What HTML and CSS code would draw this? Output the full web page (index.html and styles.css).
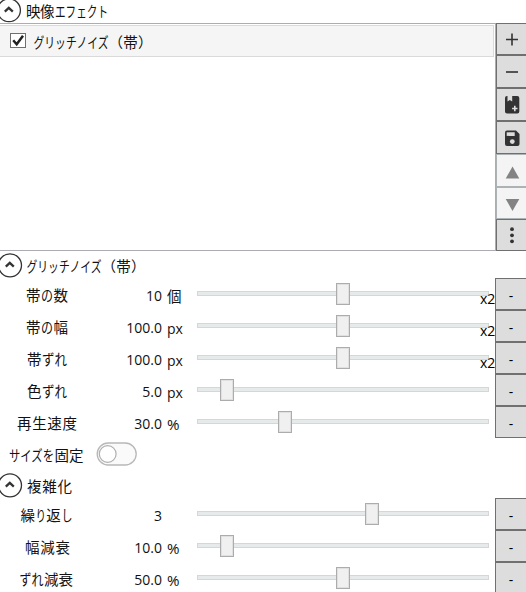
FILE: index.html
```
<!DOCTYPE html>
<html lang="ja">
<head>
<meta charset="utf-8">
<title>映像エフェクト</title>
<link rel="stylesheet" href="styles.css">
</head>
<body>
<header class="head head-first">
  <svg class="line" width="526" height="23"><circle class="ring" cx="9" cy="10.3" r="11.4"/><path class="chev" d="M4.8 11.6 8.8 7.8l4 3.8"/>
  <text x="26" y="17" textLength="28.500">映像</text><text x="55" y="17" textLength="53" lengthAdjust="spacingAndGlyphs">エフェクト</text></svg>
</header>
<section class="effects">
  <div class="list">
    <div class="item">
      <svg class="line" width="493" height="30"><rect class="box" x="10.5" y="7.5" width="15" height="14"/><path class="check" d="M13.2 14.2l3.5 4L23 9.8"/>
      <text x="33.500" y="22" textLength="75" lengthAdjust="spacingAndGlyphs">グリッチノイズ</text><text x="108.500" y="22" textLength="44">（帯）</text></svg>
    </div>
  </div>
  <div class="tools">
    <button class="tool t32"><svg width="30" height="30"><path class="sym" d="M15 9.5v12M9 15.5h12"/></svg></button>
    <button class="tool"><svg width="30" height="30"><path class="sym" d="M9 15h12"/></svg></button>
    <button class="tool"><svg width="30" height="30"><path class="solid" d="M10.500 6v5.500l2.300-1.500 2.400 1.500V6H20.300a2 2 0 0 1 2 2v13.500a2 2 0 0 1-2 2H10a2 2 0 0 1-2-2V8a2 2 0 0 1 2-2z"/><path class="cut" d="M17.800 15.800v5.400M15.100 18.500h5.400"/></svg></button>
    <button class="tool"><svg width="30" height="30"><path class="solid" d="M10 7.500h9l3.500 3.500V21a2 2 0 0 1-2 2H10a2 2 0 0 1-2-2V9.500a2 2 0 0 1 2-2z"/><path class="hole" d="M9.700 9.300h8v3.600h-8z"/><circle class="hole" cx="15.300" cy="18.600" r="2.400"/></svg></button>
    <button class="tool off"><svg width="30" height="30"><path class="tri" d="M15.500 10.500 22.300 22.500H8.700z"/></svg></button>
    <button class="tool off t32"><svg width="30" height="30"><path class="tri" d="M15.500 23 22.300 11H8.700z"/></svg></button>
    <button class="tool t32"><svg width="30" height="30"><circle class="solid" cx="15" cy="9.200" r="1.900"/><circle class="solid" cx="15" cy="15.300" r="1.900"/><circle class="solid" cx="15" cy="21.300" r="1.900"/></svg></button>
  </div>
</section>

<header class="head head-second">
  <svg class="line" width="526" height="27"><circle class="ring" cx="10" cy="14.3" r="11.500"/><path class="chev" d="M5.800 15.600 9.800 11.800l4 3.800"/>
  <text x="26.500" y="21" textLength="75" lengthAdjust="spacingAndGlyphs">グリッチノイズ</text><text x="101.500" y="21" textLength="44">（帯）</text></svg>
</header>
<div class="row">
  <svg class="line" width="197" height="32"><text x="26" y="23">帯</text><text x="41" y="23" textLength="12" lengthAdjust="spacingAndGlyphs">の</text><text x="53.500" y="23">数</text><text class="num" x="162" y="23">10</text><text x="167" y="24">個</text></svg>
  <div class="track p50"><i class="thumb"></i><span class="times">x2</span></div><button class="minus">-</button>
</div>
<div class="row">
  <svg class="line" width="197" height="32"><text x="26" y="23">帯</text><text x="41" y="23" textLength="12" lengthAdjust="spacingAndGlyphs">の</text><text x="53.500" y="23">幅</text><text class="num" x="162" y="23">100.0</text><text class="unit" x="167" y="24">px</text></svg>
  <div class="track p50"><i class="thumb"></i><span class="times">x2</span></div><button class="minus">-</button>
</div>
<div class="row">
  <svg class="line" width="197" height="32"><text x="27" y="23">帯</text><text x="42" y="23" textLength="25" lengthAdjust="spacingAndGlyphs">ずれ</text><text class="num" x="162" y="23">100.0</text><text class="unit" x="167" y="24">px</text></svg>
  <div class="track p50"><i class="thumb"></i><span class="times">x2</span></div><button class="minus">-</button>
</div>
<div class="row">
  <svg class="line" width="197" height="32"><text x="27" y="23">色</text><text x="42" y="23" textLength="25" lengthAdjust="spacingAndGlyphs">ずれ</text><text class="num" x="162" y="23">5.0</text><text class="unit" x="167" y="24">px</text></svg>
  <div class="track p10"><i class="thumb"></i></div><button class="minus">-</button>
</div>
<div class="row">
  <svg class="line" width="197" height="32"><text x="17" y="23" textLength="60">再生速度</text><text class="num" x="162" y="23">30.0</text><text class="unit" x="167" y="24" textLength="12.500" lengthAdjust="spacingAndGlyphs">%</text></svg>
  <div class="track p30"><i class="thumb"></i></div><button class="minus">-</button>
</div>
<div class="row">
  <svg class="line" width="197" height="32"><text x="9" y="23" textLength="45" lengthAdjust="spacingAndGlyphs">サイズを</text><text x="54.500" y="23">固定</text><rect class="switch" x="97.200" y="5" width="39" height="22" rx="11"/><circle class="knob" cx="107.700" cy="16" r="8.400"/></svg>
</div>
<header class="head head-third">
  <svg class="line" width="526" height="28"><circle class="ring" cx="10" cy="15.3" r="11.500"/><path class="chev" d="M5.800 16.600 9.800 12.800l4 3.800"/><text x="27" y="22" textLength="45">複雑化</text></svg>
</header>
<div class="row">
  <svg class="line" width="197" height="32"><text x="20.500" y="23">繰</text><text x="35.500" y="23" textLength="10.500" lengthAdjust="spacingAndGlyphs">り</text><text x="46.300" y="23">返</text><text x="61.500" y="23" textLength="11" lengthAdjust="spacingAndGlyphs">し</text><text class="num" x="162" y="23">3</text></svg>
  <div class="track p60"><i class="thumb"></i></div><button class="minus">-</button>
</div>
<div class="row">
  <svg class="line" width="197" height="32"><text x="25" y="23" textLength="45">幅減衰</text><text class="num" x="162" y="23">10.0</text><text class="unit" x="167" y="24" textLength="12.500" lengthAdjust="spacingAndGlyphs">%</text></svg>
  <div class="track p10"><i class="thumb"></i></div><button class="minus">-</button>
</div>
<div class="row">
  <svg class="line" width="197" height="32"><text x="19.500" y="23" textLength="24" lengthAdjust="spacingAndGlyphs">ずれ</text><text x="44" y="23">減衰</text><text class="num" x="162" y="23">50.0</text><text class="unit" x="167" y="24" textLength="12.500" lengthAdjust="spacingAndGlyphs">%</text></svg>
  <div class="track p50"><i class="thumb"></i></div><button class="minus">-</button>
</div>
</body>
</html>
```
FILE: styles.css
```
* { box-sizing: border-box; }
body { margin: 0; width: 526px; height: 592px; overflow: hidden; background: #fff; color: #000; font: 14.5px "Noto Sans CJK JP", sans-serif; }
svg { display: block; flex: none; }
text { font-size: 14.5px; fill: #111; }
.num, .unit { font-family: "Open Sans", sans-serif; font-size: 14px; }
.num { text-anchor: end; }
.head-first { height: 23px; }
.head-second { height: 27px; }
.head-third { height: 28px; }
.ring { fill: #fff; stroke: #333; stroke-width: 1.3; }
.chev { fill: none; stroke: #333; stroke-width: 2.3; }

.effects { display: flex; height: 228px; }
.list { width: 496px; border: 1px solid #abadb3; border-left: 0; padding: 1px 1px 0 0; }
.item { height: 32px; background: #f5f5f5; border: 1px solid #dadada; border-left: 0; }
.box { fill: #fff; stroke: #707070; }
.check { fill: none; stroke: #212121; stroke-width: 2.5; }
.tools { width: 30px; overflow: hidden; }
button { display: block; margin: 0; padding: 0; border: 1px solid #707070; border-right: 0; border-radius: 0; background: #ddd; }
.tool { width: 30px; height: 33px; }
.t32 { height: 32px; }
.off { background: #f4f4f4; border-color: #adb2b5; }
.sym { fill: none; stroke: #333; stroke-width: 1.6; }
.solid { fill: #333; }
.hole { fill: #ddd; }
.cut { stroke: #ddd; stroke-width: 1.6; }
.tri { fill: #838383; }

.row { display: flex; height: 32px; }
.track { position: relative; width: 292px; height: 5px; margin: 13px 6px 0 0; border: 1px solid #d6d6d6; background: #e7eaea; }
.thumb { display: block; width: 14px; height: 22px; margin-top: -9px; border: 1px solid #acacac; background: #f0f0f0; box-shadow: inset 0 0 0 1px #e0e0e0; }
.p10 .thumb { margin-left: 22px; }
.p30 .thumb { margin-left: 80px; }
.p50 .thumb { margin-left: 138px; }
.p60 .thumb { margin-left: 167px; }
.times { position: absolute; left: 282px; top: -1px; font: 14px/16px "Open Sans", sans-serif; }
.minus { width: 31px; height: 32px; padding-top: 3px; font: 14px "Open Sans", sans-serif; color: #000; }
.switch { fill: #fafafa; stroke: #b8b8b8; stroke-width: 1.3; }
.knob { fill: #fff; stroke: #b0b0b0; stroke-width: 1.2; }
```
